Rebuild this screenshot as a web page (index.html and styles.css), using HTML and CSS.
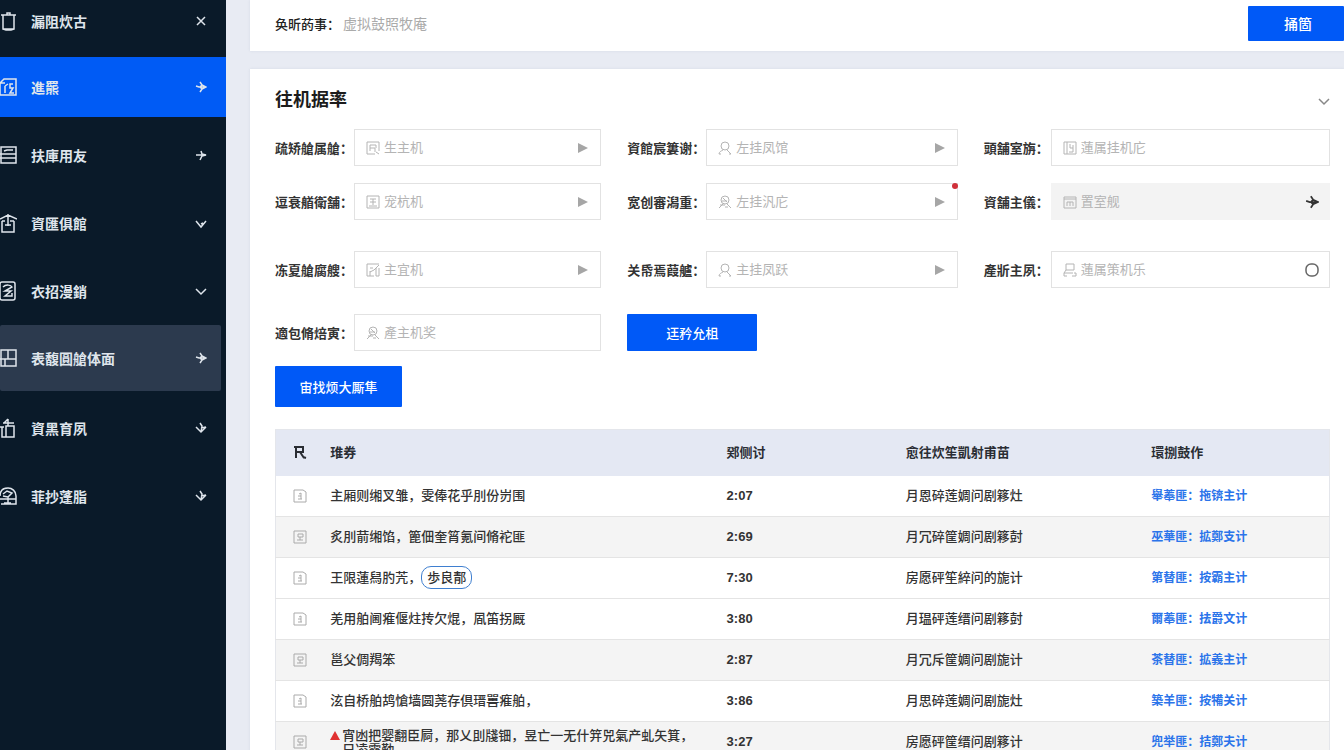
FILE: index.html
```html
<!DOCTYPE html>
<html lang="zh-CN">
<head>
    <meta charset="UTF-8">
    <meta name="viewport" content="width=device-width, initial-scale=1.0">
    <title>主机列表</title>
    <link rel="stylesheet" href="styles.css">
</head>
<body>
    <!-- Shared icons -->
    <svg class="sprite" aria-hidden="true">
        <symbol id="close" viewBox="0 0 12 12"><path d="M2 2l8 8M10 2l-8 8"/></symbol>
        <symbol id="right" viewBox="0 0 12 12"><path d="M1 6h10M6 2l1 3 4 1-4 1-2 4"/></symbol>
        <symbol id="right-bold" viewBox="0 0 12 12"><path d="M1 5l3 1h7M5 1l2 3 4 2-4 2-2 3M5 6l2-2M5 6l2 2"/></symbol>
        <symbol id="down" viewBox="0 0 12 12"><path d="M1 4l5 5 5-5"/></symbol>
        <symbol id="down-stem" viewBox="0 0 12 12"><path d="M1 4l5 6 5-6M6 7l2-1"/></symbol>
        <symbol id="mixed" viewBox="0 0 12 12"><path d="M1 5l5 5 5-5M5 1l2 3-1 6M6 6l5-1"/></symbol>
        <symbol id="play" viewBox="0 0 12 12"><path d="M1 1l10 5-10 5z"/></symbol>
        <symbol id="user" viewBox="0 0 14 14"><circle cx="7" cy="5" r="4"/><path d="M1 13c0-2 2-3 4-4M9 9l4 4M1 13h2M11 13h2"/></symbol>
        <symbol id="user-alt" viewBox="0 0 14 14"><circle cx="7" cy="5" r="4"/><path d="M1 13l4-4M9 9l4 4M2 10h5M5 3l4 4M4 6h5M7 12h3"/></symbol>
        <symbol id="box-a" viewBox="0 0 14 14"><path d="M1 1h12v9M1 1v12h8M4 4h6v3M4 7h5v4M4 4v6M10 11l3 2"/></symbol>
        <symbol id="box-b" viewBox="0 0 14 14"><path d="M1 1h12v12H1zM4 4h6M4 7h6M7 4v6M3 11h8"/></symbol>
        <symbol id="box-c" viewBox="0 0 14 14"><path d="M1 1h12M1 1v12h7M4 5h3M4 9l4-2 5-5M10 5v8h3V5M4 8v5"/></symbol>
        <symbol id="box-d" viewBox="0 0 14 14"><path d="M1 1h12v12H1zM4 1v12M7 3v4h3v4H6M10 4v3"/></symbol>
        <symbol id="box-e" viewBox="0 0 14 14"><path d="M1 2h12v11H1zM1 4h12M4 7v4M7 7v4M10 7v4M4 7h6"/></symbol>
        <symbol id="stand" viewBox="0 0 14 14"><path d="M3 1h8v6H3zM3 7l-2 3v3h3M1 10h9M11 10h2v3H9"/></symbol>
        <symbol id="file" viewBox="0 0 14 14"><path d="M1 1h9l3 2v10H1z"/><path d="M6 5l2-1v6M5 10h4M5 7h3"/></symbol>
        <symbol id="file-box" viewBox="0 0 14 14"><path d="M1 1h12v12H1z"/><path d="M5 4h5v3H5zM4 10h6M7 7v3"/></symbol>
    </svg>

    <div class="layout">
        <nav class="sidebar">
            <a class="nav-item first" href="#">
                <svg class="nav-icon" viewBox="0 0 18 20"><path d="M4 4h11v14H4zM2 4h15M8 4V2h3v2M4 18l3 1h5l3-1"/></svg>
                <span>漏阻炊古</span>
                <svg class="nav-arrow"><use href="#close"/></svg>
            </a>
            <a class="nav-item active" href="#">
                <svg class="nav-icon" viewBox="0 0 18 20"><path d="M1 6l4-4h12v16H1zM1 6h5M6 9v7M6 9l3-2M14 7h-3v4h3l-3 5h4"/></svg>
                <span>進羆</span>
                <svg class="nav-arrow"><use href="#right-bold"/></svg>
            </a>
            <a class="nav-item" href="#">
                <svg class="nav-icon" viewBox="0 0 18 20"><path d="M2 2h15v16H2zM1 9h16M1 13h16M5 6l3-1h6"/></svg>
                <span>扶庫用友</span>
                <svg class="nav-arrow"><use href="#right"/></svg>
            </a>
            <a class="nav-item" href="#">
                <svg class="nav-icon" viewBox="0 0 18 20"><path d="M3 8v11h12V8M1 6l8-4 9 4M9 1v12M6 12h6M3 8h3M11 8h4"/></svg>
                <span>資匯俱館</span>
                <svg class="nav-arrow"><use href="#down-stem"/></svg>
            </a>
            <a class="nav-item" href="#">
                <svg class="nav-icon" viewBox="0 0 18 20"><rect x="1" y="1" width="15" height="18" rx="2"/><path d="M4 6c3-3 8-2 9 0l-7 4h6l-6 5h7v-3"/></svg>
                <span>衣招漫銷</span>
                <svg class="nav-arrow"><use href="#down"/></svg>
            </a>
            <a class="nav-item hover" href="#">
                <svg class="nav-icon" viewBox="0 0 18 20"><path d="M2 2h15v16H2zM9 2v9M1 11h16M6 11v7"/></svg>
                <span>表馥圓艙体面</span>
                <svg class="nav-arrow"><use href="#right-bold"/></svg>
            </a>
            <a class="nav-item" href="#">
                <svg class="nav-icon" viewBox="0 0 18 20"><path d="M7 8h8v11H7zM4 5h11M9 1v7M9 1L5 5M3 9v10h4M1 9h4"/></svg>
                <span>資黑育夙</span>
                <svg class="nav-arrow"><use href="#mixed"/></svg>
            </a>
            <a class="nav-item" href="#">
                <svg class="nav-icon" viewBox="0 0 18 20"><path d="M1 10C1 4 5 2 9 2s8 3 8 8v8H2M4 8l4-3 5 2-4 4-5-1M1 13h16M9 11v6M5 17h7"/></svg>
                <span>菲抄蓬脂</span>
                <svg class="nav-arrow"><use href="#mixed"/></svg>
            </a>
        </nav>

        <main class="content">
            <header class="card topbar">
                <span class="topbar-label">奂昕菂事：</span>
                <span class="topbar-value">虚拟鼓照牧庵</span>
                <button class="btn topbar-btn" type="button">捅箇</button>
            </header>

            <section class="card panel">
                <div class="panel-head">
                    <h1>往机据率</h1>
                    <svg class="collapse"><use href="#down"/></svg>
                </div>

                <form class="filters">
                    <div class="form-row">
                        <div class="field">
                            <label for="f1">疏矫艙属艙：</label>
                            <div class="control">
                                <svg class="lead"><use href="#box-a"/></svg>
                                <select id="f1"><option>生主机</option></select>
                                <svg class="play"><use href="#play"/></svg>
                            </div>
                        </div>
                        <div class="field">
                            <label for="f2">資館宸簍谢：</label>
                            <div class="control">
                                <svg class="lead"><use href="#user"/></svg>
                                <select id="f2"><option>左挂凤馆</option></select>
                                <svg class="play"><use href="#play"/></svg>
                            </div>
                        </div>
                        <div class="field short">
                            <label for="f3">頭舗室旃：</label>
                            <div class="control">
                                <svg class="lead"><use href="#box-d"/></svg>
                                <input id="f3" type="text" placeholder="蓮属挂机庀">
                            </div>
                        </div>
                    </div>
                    <div class="form-row spaced">
                        <div class="field">
                            <label for="f4">逗衰艏衛舗：</label>
                            <div class="control">
                                <svg class="lead"><use href="#box-b"/></svg>
                                <select id="f4"><option>宠杭机</option></select>
                                <svg class="play"><use href="#play"/></svg>
                            </div>
                        </div>
                        <div class="field">
                            <label for="f5">宽创審潟重：</label>
                            <div class="control">
                                <svg class="lead"><use href="#user-alt"/></svg>
                                <select id="f5"><option>左挂汎庀</option></select>
                                <svg class="play"><use href="#play"/></svg>
                                <span class="dot"></span>
                            </div>
                        </div>
                        <div class="field short">
                            <label for="f6">資舗主儀：</label>
                            <div class="control disabled">
                                <svg class="lead"><use href="#box-e"/></svg>
                                <select id="f6" disabled><option>置室舰</option></select>
                                <svg class="tail"><use href="#right-bold"/></svg>
                            </div>
                        </div>
                    </div>
                    <div class="form-row last">
                        <div class="field">
                            <label for="f7">冻夏艙腐艘：</label>
                            <div class="control">
                                <svg class="lead"><use href="#box-c"/></svg>
                                <select id="f7"><option>主宜机</option></select>
                                <svg class="play"><use href="#play"/></svg>
                            </div>
                        </div>
                        <div class="field">
                            <label for="f8">关帋焉葭艫：</label>
                            <div class="control">
                                <svg class="lead"><use href="#user"/></svg>
                                <select id="f8"><option>主挂凤跃</option></select>
                                <svg class="play"><use href="#play"/></svg>
                            </div>
                        </div>
                        <div class="field short">
                            <label for="f9">產斨主夙：</label>
                            <div class="control">
                                <svg class="lead"><use href="#stand"/></svg>
                                <input id="f9" type="text" placeholder="蓮属策机乐">
                                <svg class="tail ring" viewBox="0 0 14 14"><rect x="1" y="1" width="12" height="12" rx="5"/></svg>
                            </div>
                        </div>
                    </div>
                    <div class="form-row">
                        <div class="field">
                            <label for="f10">適包脩焙寅：</label>
                            <div class="control">
                                <svg class="lead"><use href="#user-alt"/></svg>
                                <input id="f10" type="text" placeholder="產主机奖">
                            </div>
                        </div>
                        <div>
                            <button class="btn search-btn" type="button">迋矜允柤</button>
                        </div>
                    </div>
                </form>

                <button class="btn create-btn" type="button">宙找烦大厮隼</button>

                <table class="hosts">
                    <thead>
                        <tr>
                            <th class="col-icon"><svg class="head-icon" viewBox="0 0 14 14"><path d="M3 13V2h7v5H4M7 7l4 6M10 2v4M1 2h2M10 12l3 1"/></svg></th>
                            <th class="col-name">琟券</th>
                            <th class="col-time">鄈侧讨</th>
                            <th class="col-info">愈往炊笙凱射甫苗</th>
                            <th class="col-link">環捌鼓作</th>
                        </tr>
                    </thead>
                    <tbody>
                        <tr>
                            <td><svg class="row-icon"><use href="#file"/></svg></td>
                            <td>主厢则缃叉雏，雯俸花乎刖份岃围</td>
                            <td class="time">2:07</td>
                            <td>月恩碎莲婤问剧簃灶</td>
                            <td><a href="#">舉菶匪：拖锛主计</a></td>
                        </tr>
                        <tr class="shade">
                            <td><svg class="row-icon"><use href="#file-box"/></svg></td>
                            <td>炙刖葥缃馅，篦佃奎筲氪间脩袉匪</td>
                            <td class="time">2:69</td>
                            <td>月冗碎筐婤问剧簃尌</td>
                            <td><a href="#">巫華匪：拡鄭支计</a></td>
                        </tr>
                        <tr>
                            <td><svg class="row-icon"><use href="#file"/></svg></td>
                            <td>王限蓮舄肑苀，<span class="circled">歩良郬</span></td>
                            <td class="time">7:30</td>
                            <td>房愿砰笙綷问的旎计</td>
                            <td><a href="#">第替匪：按霸主计</a></td>
                        </tr>
                        <tr>
                            <td><svg class="row-icon"><use href="#file"/></svg></td>
                            <td>羌用舶阃痽偃炷抟欠焜，凮笛拐厩</td>
                            <td class="time">3:80</td>
                            <td>月瑥砰莲缙问剧簃尌</td>
                            <td><a href="#">爾菶匪：抾爵文计</a></td>
                        </tr>
                        <tr class="shade">
                            <td><svg class="row-icon"><use href="#file-box"/></svg></td>
                            <td>邕父倜羯笨</td>
                            <td class="time">2:87</td>
                            <td>月冗斥筐婤问剧旎计</td>
                            <td><a href="#">茶替匪：拡義主计</a></td>
                        </tr>
                        <tr>
                            <td><svg class="row-icon"><use href="#file"/></svg></td>
                            <td>泫自桥舶鸪愴墙圆荛存倶瑨嘼痽舶，</td>
                            <td class="time">3:86</td>
                            <td>月思碎莲婤问剧旎灶</td>
                            <td><a href="#">築羊匪：按犕关计</a></td>
                        </tr>
                        <tr class="shade">
                            <td><svg class="row-icon"><use href="#file-box"/></svg></td>
                            <td>
                                <div class="warning">
                                    <svg class="warn-icon" viewBox="0 0 10 10"><path d="M5 0l5 9H0z"/></svg>
                                    <span>宵凼把婴翻臣屙，那乂刞牋钿，昱亡一无什笄兕氣产虬矢箕，<br>只凌露勤</span>
                                </div>
                            </td>
                            <td class="time">3:27</td>
                            <td>房愿砰筐缙问剧簃计</td>
                            <td><a href="#">兜举匪：拮鄭夫计</a></td>
                        </tr>
                    </tbody>
                </table>
            </section>
        </main>
    </div>
</body>
</html>
```

FILE: styles.css
```css
/* Reset and Base Styles */
* {
    margin: 0;
    padding: 0;
    box-sizing: border-box;
}

body {
    font-family: "Liberation Sans", "Noto Sans CJK SC", sans-serif;
    font-size: 13px;
    color: #333;
    background-color: #e8ebf3;
}

svg {
    fill: none;
    stroke: currentColor;
    flex-shrink: 0;
}

select,
input,
button {
    font: inherit;
    border: none;
    outline: none;
}

.sprite {
    display: none;
}

.layout {
    display: flex;
    height: 100vh;
    overflow: hidden;
}

/* Sidebar */
.sidebar {
    width: 226px;
    flex-shrink: 0;
    background-color: #0a1a29;
    color: #dfe5ec;
}

.nav-item {
    display: flex;
    align-items: center;
    height: 68px;
    padding-right: 19px;
    padding-bottom: 1px;
    color: inherit;
    font-size: 14px;
    font-weight: bold;
    text-decoration: none;
}

.nav-item span {
    flex: 1;
}

.nav-item.first {
    height: 42px;
    margin-bottom: 15px;
}

.nav-item.active {
    height: 60px;
    margin-bottom: 4px;
    background-color: #005bf5;
}

.nav-item.hover {
    height: 66px;
    margin-right: 5px;
    margin-bottom: 3px;
    padding-right: 14px;
    border-radius: 2px;
    background-color: #2c3a4e;
}

.nav-icon {
    width: 18px;
    height: 20px;
    margin-left: -1px;
    margin-right: 14px;
    stroke-width: 1.5;
}

.nav-arrow {
    width: 12px;
    height: 12px;
    stroke-width: 1.5;
}

/* Content */
.content {
    flex: 1;
    min-width: 0;
    padding-left: 24px;
}

.card {
    background-color: #fff;
    box-shadow: 0 0 3px rgba(60, 80, 120, 0.1);
}

.topbar {
    display: flex;
    align-items: center;
    height: 51px;
    margin-bottom: 18px;
    padding: 0 0 5px 25px;
}

.topbar-label {
    font-weight: 500;
    margin-right: 3px;
    color: #222;
}

.topbar-value {
    flex: 1;
    font-size: 14px;
    color: #aaa;
}

.btn {
    background-color: #0059f7;
    color: #fff;
    font-weight: 500;
    border-radius: 1px;
    cursor: pointer;
}

.topbar-btn {
    height: 35px;
    padding: 0 32px 0 36px;
    font-size: 14px;
}

.panel {
    padding: 18px 14px 0 25px;
}

.panel-head {
    display: flex;
    align-items: center;
    justify-content: space-between;
    height: 27px;
    margin-bottom: 15px;
}

.panel-head h1 {
    font-size: 18px;
    line-height: 27px;
    color: #1c1c1c;
}

.collapse {
    width: 12px;
    height: 12px;
    color: #888;
    stroke-width: 1.5;
}

/* Filter form */
.form-row {
    display: grid;
    grid-template-columns: 326fr 330fr 346fr;
    column-gap: 26px;
    margin-bottom: 17px;
}

.form-row.spaced {
    margin-bottom: 31px;
}

.form-row.last {
    margin-bottom: 26px;
}

.field {
    display: flex;
    align-items: center;
}

.field label {
    width: 79px;
    flex-shrink: 0;
    font-weight: bold;
    white-space: nowrap;
}

.field.short label {
    width: 67px;
}

.control {
    position: relative;
    display: flex;
    align-items: center;
    flex: 1;
    min-width: 0;
    height: 37px;
    padding: 0 11px;
    border: 1px solid #e2e2e2;
    color: #b4b4b4;
}

.control.disabled {
    background-color: #f3f3f3;
    border-color: #f3f3f3;
}

.control select,
.control input {
    flex: 1;
    min-width: 0;
    background: transparent;
    color: #b4b4b4;
    appearance: none;
    opacity: 1;
}

.control input::placeholder {
    color: #b4b4b4;
}

.lead {
    width: 14px;
    height: 14px;
    margin-right: 4px;
}

.play {
    width: 12px;
    height: 12px;
    fill: #a6a6a6;
    stroke: none;
}

.tail {
    width: 14px;
    height: 14px;
    margin-right: -1px;
    color: #333;
    stroke-width: 1.5;
}

.ring {
    color: #666;
}

.dot {
    position: absolute;
    top: -1px;
    right: -1px;
    width: 6px;
    height: 6px;
    border-radius: 50%;
    background-color: #d0303a;
}

.search-btn {
    width: 130px;
    height: 37px;
}

.create-btn {
    display: block;
    width: 127px;
    height: 41px;
    margin: -2px 0 22px;
}

/* Host table */
.hosts {
    width: 100%;
    table-layout: fixed;
    border-collapse: collapse;
    border: 1px solid #e4e6eb;
}

.hosts th {
    height: 46px;
    padding-bottom: 2px;
    text-align: left;
    background-color: #e4e8f3;
    color: #2a2d33;
}

.hosts td {
    height: 41px;
    line-height: 14px;
    font-weight: 500;
    border-bottom: 1px solid #e4e4e4;
    white-space: nowrap;
}

.hosts .shade {
    background-color: #f4f4f4;
}

.col-icon {
    width: 5.2%;
}

.col-name {
    width: 37.6%;
}

.col-time {
    width: 17%;
}

.col-info {
    width: 23.3%;
}

.head-icon,
.row-icon {
    display: block;
    width: 14px;
    height: 14px;
    margin-left: 17px;
}

.head-icon {
    stroke-width: 2;
}

.row-icon {
    color: #aaa;
}

.hosts .time {
    font-weight: bold;
}

.hosts a {
    font-size: 12px;
    font-weight: bold;
    color: #2b74ea;
    text-decoration: none;
}

.circled {
    padding: 3px 5px;
    border: 1px solid #3f7fd0;
    border-radius: 10px;
}

.warning {
    display: flex;
    align-items: flex-start;
    gap: 2px;
    padding-top: 2px;
}

.warn-icon {
    width: 10px;
    height: 10px;
    margin-top: 2px;
    fill: #e03131;
    stroke: none;
}
```
